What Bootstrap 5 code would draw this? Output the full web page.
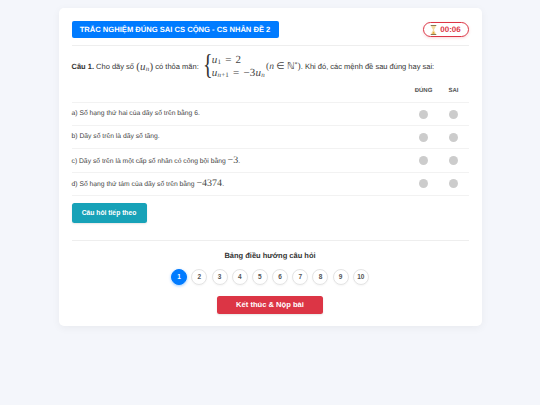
<!DOCTYPE html>
<html lang="vi">
<head>
<meta charset="utf-8">
<title>Trắc nghiệm đúng sai</title>
<link href="https://cdn.jsdelivr.net/npm/bootstrap@5.3.0/dist/css/bootstrap.min.css" rel="stylesheet">
<style>
html,body{height:405px;overflow:hidden}
body{background:#f4f6fb;font-family:"Liberation Sans",Arial,sans-serif;font-size:7.5px;color:#333;padding-top:8px;text-rendering:geometricPrecision}
.quiz-box{width:423px;height:318px;margin:0 auto;background:#fff;border-radius:5px;box-shadow:0 2px 8px rgba(0,0,0,.05);padding:13px}
.quiz-box>*{flex-shrink:0}
.quiz-head{height:25px;border-bottom:1px solid #eee}
.quiz-title{background:#007bff;color:#fff;font-weight:700;font-size:7.6px;height:17px;width:207px;border-radius:2px}
.quiz-timer{border:1px solid #dc3545;color:#dc3545;font-weight:700;font-size:8px;height:15px;width:46px;border-radius:8px;gap:3px;margin-top:1px;box-shadow:0 1px 3px rgba(220,53,69,.2)}
.q-line{height:28px;margin-top:7px;font-size:7.5px;color:#333}
.mth{font-family:"Liberation Serif",serif;font-size:10px;color:#444;white-space:nowrap}
.mth i{font-style:italic}
.mth sub{font-size:6.5px;bottom:-.2em;line-height:0}
.q-math{font-size:11px;letter-spacing:.2px}
.q-math sub{font-size:7px}
.set-math{font-size:9.5px;margin-left:-1px}
.set-math sup{font-size:6px}
.eq{margin:0 4px}
.brace{font-family:"Liberation Serif",serif;font-size:29px;font-weight:400;line-height:1;color:#333;margin:0 3px 0 3px;width:7px;transform:scaleX(.7) translateY(-2px)}
.sys{line-height:13px}
.ans-head{height:15px;margin-top:3px;font-size:6px;font-weight:700;color:#555}
.col-d{width:30px;text-align:center}
.ans-row{height:23.2px;border-top:1px solid #f2f2f2;font-size:6.75px;color:#444}
.ans-list{border-bottom:1px solid #f2f2f2;margin-top:3px}
.dot{width:9px;height:9px;border-radius:50%;background:#ccc;display:block;margin:0 auto}
.next-btn{background:#17a2b8;color:#fff;font-weight:700;font-size:6.75px;width:75px;height:20px;border-radius:2.5px;margin-top:7px;box-shadow:0 1px 2px rgba(0,0,0,.1)}
.nav-box{border-top:1px solid #eee;margin-top:17px;padding-top:10px}
.nav-title{font-weight:700;font-size:7.5px;color:#333;line-height:10px;margin-bottom:8px;margin-top:0}
.nav-num{width:16px;height:16px;border-radius:50%;border:1px solid #e4e4e4;background:#fff;color:#555;font-size:6.5px;font-weight:700;padding:0;box-shadow:0 1px 2px rgba(0,0,0,.04)}
.nav-num.now{background:#007bff;border-color:#007bff;color:#fff;box-shadow:0 1px 3px rgba(0,123,255,.4)}
.nav-row{gap:4.2px}
.end-btn{background:#dc3545;color:#fff;font-weight:700;font-size:7.6px;width:106px;height:18px;border-radius:2.5px;margin-top:11px;box-shadow:0 1px 2px rgba(0,0,0,.1)}
</style>
</head>
<body>
<main class="quiz-box d-flex flex-column">
  <header class="quiz-head d-flex justify-content-between align-items-start">
    <div class="quiz-title d-flex align-items-center justify-content-center text-nowrap">TRẮC NGHIỆM ĐÚNG SAI CS CỘNG - CS NHÂN ĐỀ 2</div>
    <div class="quiz-timer d-flex align-items-center justify-content-center text-nowrap">
      <svg width="7" height="10" viewBox="0 0 6 9" aria-hidden="true"><path d="M.5.5h5M.5 8.500h5" stroke="#8a7a55" stroke-width="1"/><path d="M1 1h4c0 1.700-1.500 2.500-1.500 3.500S5 6.300 5 8H1c0-1.700 1.500-2.500 1.500-3.500S1 2.700 1 1z" fill="#f3d9a0"/><path d="M1.800 7.800h2.400L3 5.800z" fill="#e2a93b"/></svg>
      <span>00:06</span>
    </div>
  </header>
  <div class="q-line d-flex align-items-center text-nowrap">
    <b>Câu 1.</b>&nbsp;Cho dãy số&nbsp;<span class="mth q-math">(<i>u</i><sub><i>n</i></sub>)</span>&nbsp;có thỏa mãn:
    <span class="brace">{</span>
    <span class="mth q-math sys d-flex flex-column"><span><i>u</i><sub>1</sub><span class="eq">=</span>2</span><span><i>u</i><sub><i>n</i>+1</sub><span class="eq">=</span>−3<i>u</i><sub><i>n</i></sub></span></span>
    &nbsp;<span class="mth set-math">(<i>n</i> ∈ ℕ<sup>*</sup>)</span>. Khi đó, các mệnh đề sau đúng hay sai:
  </div>
  <div class="ans-head d-flex align-items-center justify-content-end"><span class="col-d">ĐÚNG</span><span class="col-d">SAI</span></div>
  <div class="ans-list">
    <div class="ans-row d-flex align-items-center"><span class="flex-grow-1">a) Số hạng thứ hai của dãy số trên bằng 6.</span><span class="col-d"><span class="dot"></span></span><span class="col-d"><span class="dot"></span></span></div>
    <div class="ans-row d-flex align-items-center"><span class="flex-grow-1">b) Dãy số trên là dãy số tăng.</span><span class="col-d"><span class="dot"></span></span><span class="col-d"><span class="dot"></span></span></div>
    <div class="ans-row d-flex align-items-center"><span class="flex-grow-1">c) Dãy số trên là một cấp số nhân có công bội bằng <span class="mth">−3</span>.</span><span class="col-d"><span class="dot"></span></span><span class="col-d"><span class="dot"></span></span></div>
    <div class="ans-row d-flex align-items-center"><span class="flex-grow-1">d) Số hạng thứ tám của dãy số trên bằng <span class="mth">−4374</span>.</span><span class="col-d"><span class="dot"></span></span><span class="col-d"><span class="dot"></span></span></div>
  </div>
  <div><button type="button" class="btn next-btn d-flex align-items-center justify-content-center p-0 border-0 text-nowrap">Câu hỏi tiếp theo</button></div>
  <section class="nav-box text-center">
    <h2 class="nav-title">Bảng điều hướng câu hỏi</h2>
    <div class="nav-row d-flex justify-content-center">
      <button type="button" class="nav-num now">1</button>
      <button type="button" class="nav-num">2</button>
      <button type="button" class="nav-num">3</button>
      <button type="button" class="nav-num">4</button>
      <button type="button" class="nav-num">5</button>
      <button type="button" class="nav-num">6</button>
      <button type="button" class="nav-num">7</button>
      <button type="button" class="nav-num">8</button>
      <button type="button" class="nav-num">9</button>
      <button type="button" class="nav-num">10</button>
    </div>
    <button type="button" class="btn end-btn d-inline-flex align-items-center justify-content-center p-0 border-0 text-nowrap">Kết thúc &amp; Nộp bài</button>
  </section>
</main>
<script src="https://cdn.jsdelivr.net/npm/bootstrap@5.3.0/dist/js/bootstrap.bundle.min.js"></script>
</body>
</html>
